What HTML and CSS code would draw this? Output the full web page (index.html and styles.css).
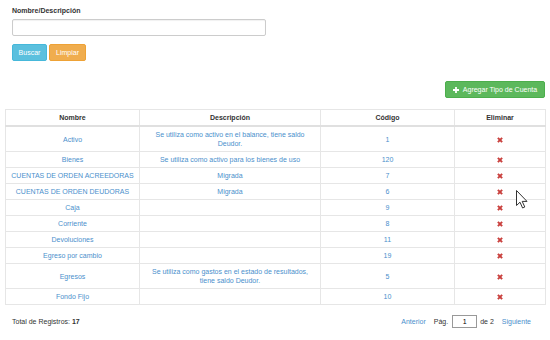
FILE: index.html
```html
<!DOCTYPE html>
<html lang="es">
<head>
<meta charset="utf-8">
<title>Tipos de Cuenta</title>
<link rel="stylesheet" href="styles.css">
</head>
<body>
<div class="page">
  <form class="filter">
    <label class="filter-label">Nombre/Descripción</label>
    <input class="filter-input" type="text">
    <div class="filter-actions">
      <button type="button" class="btn btn-info">Buscar</button>
      <button type="button" class="btn btn-warning">Limpiar</button>
    </div>
  </form>

  <div class="toolbar">
    <button type="button" class="btn btn-success">
      <svg class="plus" viewBox="0 0 6 6" width="6" height="6"><path d="M2.1 0h1.8v2.1H6v1.8H3.9V6H2.1V3.9H0V2.1h2.1z" fill="#fff"/></svg>
      Agregar Tipo de Cuenta
    </button>
  </div>

  <table class="grid">
    <colgroup>
      <col class="c1"><col class="c2"><col class="c3"><col class="c4">
    </colgroup>
    <thead>
      <tr><th>Nombre</th><th>Descripción</th><th>Código</th><th>Eliminar</th></tr>
    </thead>
    <tbody>
      <tr><td><a>Activo</a></td><td><a>Se utiliza como activo en el balance, tiene saldo Deudor.</a></td><td><a>1</a></td><td><span class="del"></span></td></tr>
      <tr><td><a>Bienes</a></td><td><a>Se utiliza como activo para los bienes de uso</a></td><td><a>120</a></td><td><span class="del"></span></td></tr>
      <tr><td><a>CUENTAS DE ORDEN ACREEDORAS</a></td><td><a>Migrada</a></td><td><a>7</a></td><td><span class="del"></span></td></tr>
      <tr><td><a>CUENTAS DE ORDEN DEUDORAS</a></td><td><a>Migrada</a></td><td><a>6</a></td><td><span class="del"></span></td></tr>
      <tr><td><a>Caja</a></td><td></td><td><a>9</a></td><td><span class="del"></span></td></tr>
      <tr><td><a>Corriente</a></td><td></td><td><a>8</a></td><td><span class="del"></span></td></tr>
      <tr><td><a>Devoluciones</a></td><td></td><td><a>11</a></td><td><span class="del"></span></td></tr>
      <tr><td><a>Egreso por cambio</a></td><td></td><td><a>19</a></td><td><span class="del"></span></td></tr>
      <tr><td><a>Egresos</a></td><td><a>Se utiliza como gastos en el estado de resultados, tiene saldo Deudor.</a></td><td><a>5</a></td><td><span class="del"></span></td></tr>
      <tr><td><a>Fondo Fijo</a></td><td></td><td><a>10</a></td><td><span class="del"></span></td></tr>
    </tbody>
  </table>

  <div class="footer">
    <div class="total">Total de Registros: <b>17</b></div>
    <div class="pager">
      <a class="pager-link prev">Anterior</a>
      <span class="pag">Pág.</span>
      <input class="pager-input" type="text" value="1">
      <span class="of">de 2</span>
      <a class="pager-link next">Siguiente</a>
    </div>
  </div>

  <svg class="cursor" width="12" height="19" viewBox="0 0 12 19"><path d="M0.5 0.5v15l3.5-3.3 2.6 5.8 2.2-1-2.6-5.6h4.8z" fill="#fff" stroke="#333" stroke-width="1"/></svg>
</div>
</body>
</html>
```
FILE: styles.css
```css
* { box-sizing: border-box; }
html, body { margin: 0; padding: 0; background: #fff; }
body {
  font-family: "Liberation Sans", Arial, sans-serif;
  font-size: 7px;
  line-height: 9px;
  color: #333;
}
.page { position: relative; width: 550px; height: 340px; }

.filter { padding: 6px 0 0 12px; margin: 0; }
.filter-label { display: block; font-weight: bold; height: 13px; line-height: 9px; }
.filter-input {
  display: block;
  width: 254px; height: 17px;
  border: 1px solid #ccc; border-radius: 2px;
  margin: 0; padding: 0 4px;
  box-shadow: inset 0 1px 1px rgba(0,0,0,.06);
}
.filter-actions { display: flex; gap: 2px; margin-top: 8px; }

.btn {
  font-family: inherit; font-size: 7px;
  color: #fff; border: 1px solid transparent; border-radius: 2px;
  height: 17px; margin: 0; padding: 0 5px;
  display: inline-flex; align-items: center; justify-content: center;
}
.btn-info { background: #5bc0de; border-color: #46b8da; width: 35px; }
.btn-warning { background: #f0ad4e; border-color: #eea236; width: 37px; }
.btn-success { background: #5cb85c; border-color: #4cae4c; width: 100px; gap: 4px; }
.plus { display: block; }

.toolbar { display: flex; justify-content: flex-end; padding: 20px 5px 0 0; }

.grid {
  margin: 11px 5px 0 5px;
  width: 540px;
  border-collapse: collapse;
  table-layout: fixed;
  border: 1px solid #e3e3e3;
}
.c1 { width: 134px; } .c2 { width: 181px; } .c3 { width: 134px; } .c4 { width: 91px; }
.grid th, .grid td {
  text-align: center; vertical-align: middle;
  padding: 3px 4px;
  border: 1px solid #e6e6e6;
  line-height: 9px;
}
.grid th { font-weight: bold; color: #333; border-bottom: 2px solid #e0e0e0; }
.grid td a { color: #4a8fcc; }
.del {
  display: inline-block; width: 5px; height: 5px; position: relative; vertical-align: middle;
}
.del::before, .del::after {
  content: ""; position: absolute; left: -0.5px; top: 1.5px; width: 6px; height: 2px;
  background: #c9403d;
}
.del::before { transform: rotate(45deg); }
.del::after { transform: rotate(-45deg); }

.footer {
  display: flex; justify-content: space-between; align-items: center;
  padding: 10px 19px 0 12px;
}
.pager { display: flex; align-items: center; }
.pager-link { color: #4a8fcc; }
.prev { margin-right: 8px; }
.pag { margin-right: 4px; }
.of { margin-left: 3px; margin-right: 8px; }
.pager-input {
  width: 25px; height: 13px; border: 1px solid #999; margin: 0; padding: 0;
  font-family: inherit; font-size: 7px; text-align: center;
}

.cursor { position: absolute; left: 516px; top: 190px; }
```
